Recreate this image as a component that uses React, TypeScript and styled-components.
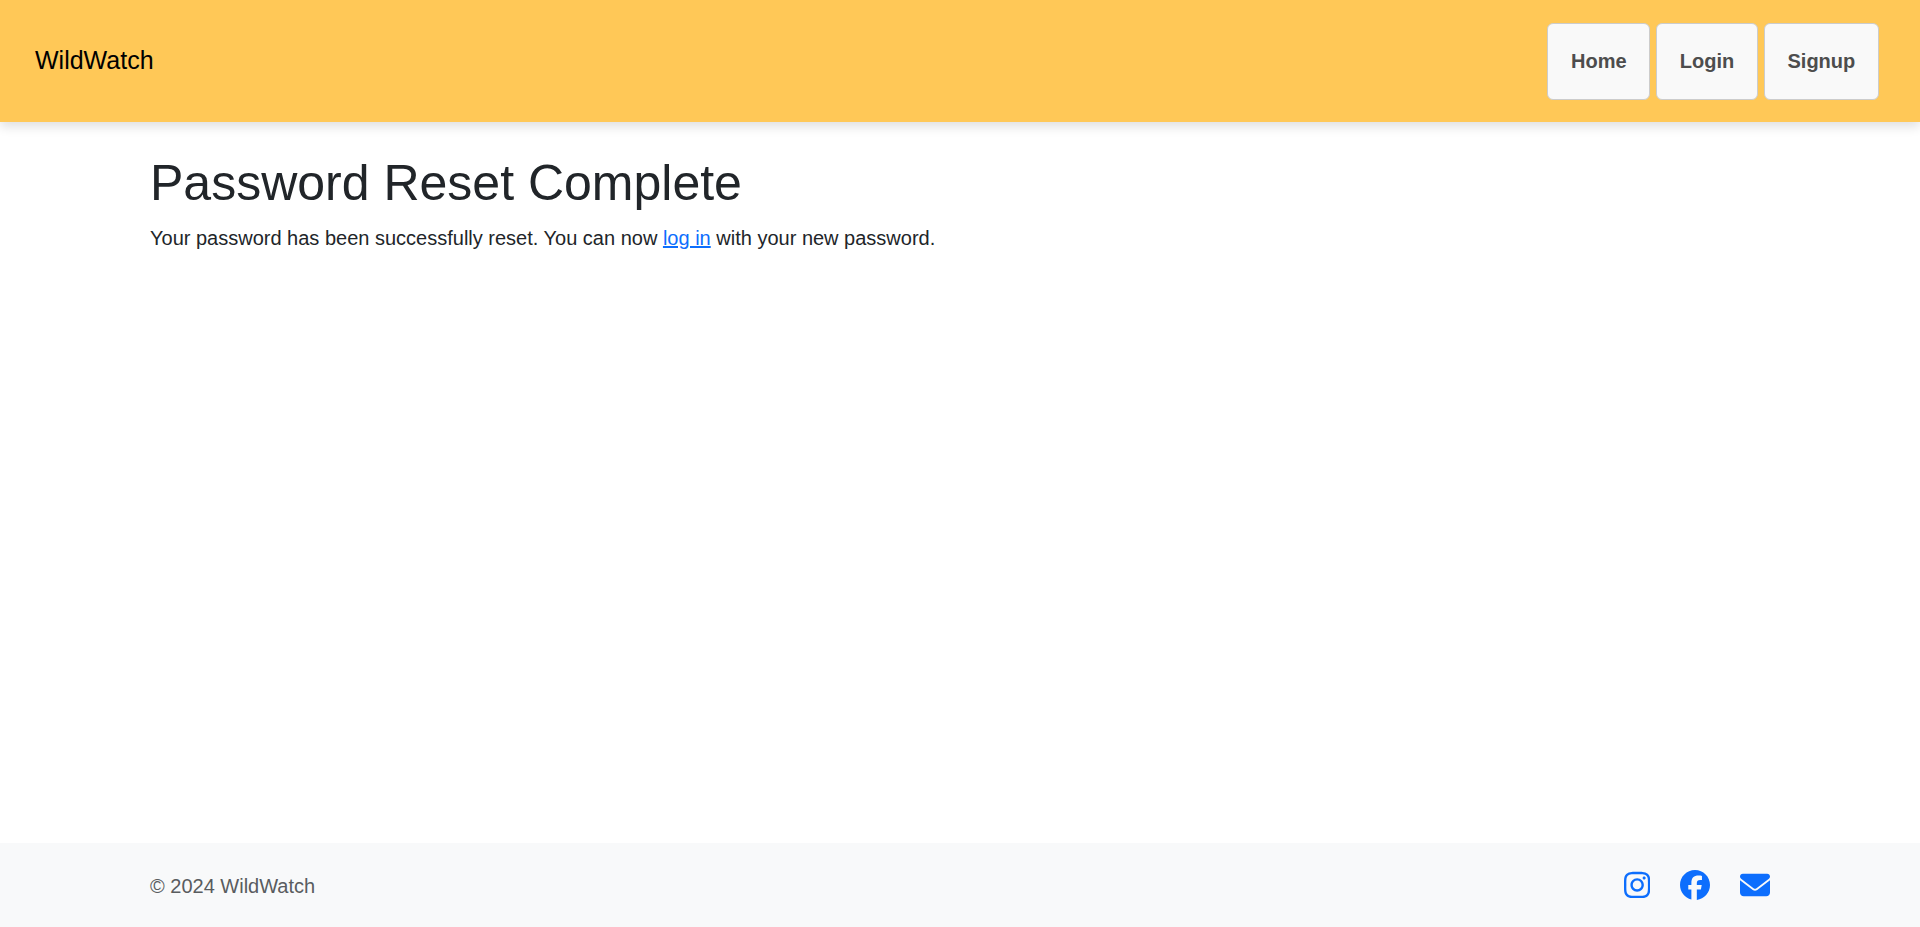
import React from "react";
import styled, { createGlobalStyle } from "styled-components";
import { FaInstagram, FaFacebook, FaEnvelope } from "react-icons/fa6";

const GlobalStyle = createGlobalStyle`
  *, *::before, *::after { box-sizing: border-box; }
  body {
    margin: 0;
    background: #fff;
    color: #212529;
    font-family: "Liberation Sans", Arial, sans-serif;
    font-size: 20px;
    line-height: 1.5;
  }
`;

const Page = styled.div`
  display: flex;
  flex-direction: column;
  min-height: 100vh;
`;

const Navbar = styled.header`
  display: flex;
  align-items: center;
  justify-content: space-between;
  height: 122px;
  padding: 0 41.25px 0 35px;
  background: #ffc857;
  box-shadow: 0 5px 10px rgba(0, 0, 0, 0.12);
`;

const Brand = styled.a`
  color: #000;
  font-size: 25px;
  text-decoration: none;
`;

const Nav = styled.nav`
  display: flex;
  gap: 6.25px;
`;

const NavLink = styled.a`
  padding: 22.5px;
  border: 1px solid #ccc;
  border-radius: 6px;
  background: #f9f9f9;
  color: #4d4d4d;
  font-weight: 700;
  text-decoration: none;
`;

const Main = styled.main`
  flex: 1;
  padding: 31px 150px 0;
`;

const Title = styled.h1`
  margin: 0 0 10px;
  font-size: 50px;
  font-weight: 500;
  line-height: 1.2;
`;

const Message = styled.p`
  margin: 0;
`;

const Link = styled.a`
  color: #0d6efd;
  text-decoration: underline;
`;

const Footer = styled.footer`
  display: flex;
  align-items: center;
  justify-content: space-between;
  height: 84px;
  padding: 0 150px;
  background: #f8f9fa;
`;

const Copyright = styled.span`
  padding-top: 2px;
  color: #595c5f;
`;

const Social = styled.div`
  display: flex;
  gap: 30px;
`;

const SocialLink = styled.a<{ $width?: string }>`
  display: flex;
  color: #0d6efd;
  font-size: 30px;

  svg {
    width: ${({ $width }) => $width ?? "1em"};
  }
`;

export default function App() {
  return (
    <Page>
      <GlobalStyle />
      <Navbar>
        <Brand href="#">WildWatch</Brand>
        <Nav>
          <NavLink href="#">Home</NavLink>
          <NavLink href="#">Login</NavLink>
          <NavLink href="#">Signup</NavLink>
        </Nav>
      </Navbar>
      <Main>
        <Title>Password Reset Complete</Title>
        <Message>
          Your password has been successfully reset. You can now <Link href="#">log in</Link> with your new password.
        </Message>
      </Main>
      <Footer>
        <Copyright>© 2024 WildWatch</Copyright>
        <Social>
          <SocialLink href="#" aria-label="Instagram" $width="0.875em"><FaInstagram /></SocialLink>
          <SocialLink href="#" aria-label="Facebook"><FaFacebook /></SocialLink>
          <SocialLink href="#" aria-label="Email"><FaEnvelope /></SocialLink>
        </Social>
      </Footer>
    </Page>
  );
}
